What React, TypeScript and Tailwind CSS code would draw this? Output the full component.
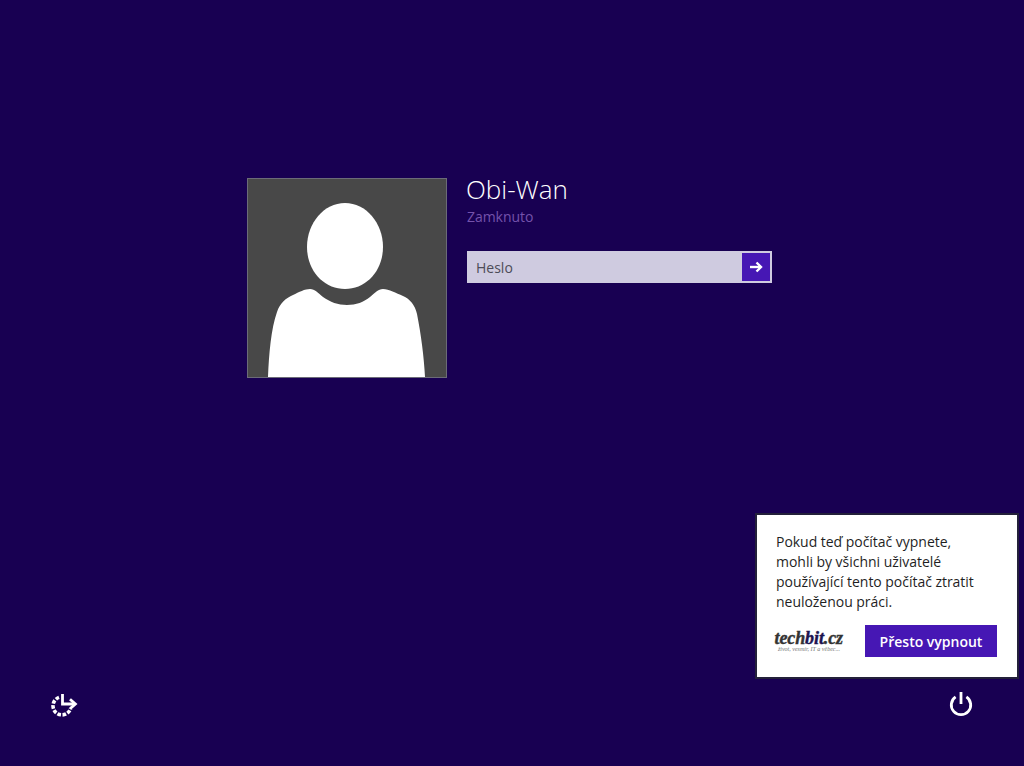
const Avatar = () => (
  <div className="w-[200px] h-[200px] bg-[#484848] border border-[#6b6b78] shrink-0 overflow-hidden">
    <svg viewBox="0 0 198 198" className="w-full h-full block">
      <path d="M59 68C59 44 76 24 97 24C118 24 135 44 135 68C135 92 118 110 97 110C76 110 59 92 59 68Z" fill="#fff" />
      <path d="M20 198C21 175 23 150 29 133C32 124 38 119 45 116C51 113 57 110 62 110C67 110 70 114 75 118C82 123 90 126 99 126C108 126 116 123 122 118C127 114 130 110 135 110C141 110 148 114 155 117C162 120 167 126 169 135C173 155 176 178 177 198Z" fill="#fff" />
    </svg>
  </div>
);

const EaseIcon = () => (
  <svg width="28" height="26" viewBox="0 0 28 26" fill="none" stroke="#fff">
    <path d="M9 6.4A9 9 0 1 0 20.6 17.5" strokeWidth="3.6" strokeDasharray="3.6 1.5" />
    <path d="M12.5 3V13H25" strokeWidth="2.8" />
    <path d="M20 8.2L25.4 13L20 17.8" strokeWidth="2.8" />
  </svg>
);

const PowerIcon = () => (
  <svg width="26" height="28" viewBox="0 0 26 28" fill="none" stroke="#fff" strokeWidth="2.8">
    <path d="M7.6 6.9A9.7 9.7 0 1 0 18.4 6.9" />
    <path d="M13 2V14" />
  </svg>
);

const App = () => {
  return (
    <div className="relative w-[1024px] h-[766px] overflow-hidden bg-[#180052] font-['Open_Sans','Noto_Sans',sans-serif] flex flex-col">
      <div className="flex pl-[247px] pt-[178px] gap-5">
        <Avatar />
        <div className="w-[305px]">
          <h1 className="text-[26px] leading-[23px] font-light text-white -ml-px">Obi-Wan</h1>
          <p className="text-[14px] leading-[20px] tracking-[-0.05px] text-[#7452ab] mt-[6px]">Zamknuto</p>
          <div className="mt-[24px] h-8 bg-[#cfcbe0] flex items-center justify-between pl-[9px] pr-0.5">
            <span className="text-[14px] text-[#4d4b57]">Heslo</span>
            <div className="w-7 h-7 bg-[#4617b4] flex items-center justify-center">
              <svg width="14" height="12" viewBox="0 0 14 12" fill="none" stroke="#fff" strokeWidth="2.4">
                <path d="M1 6H12" />
                <path d="M7.5 1.5L12 6L7.5 10.5" />
              </svg>
            </div>
          </div>
        </div>
      </div>

      <div className="mt-auto flex justify-between items-center px-[50px] pb-[48px]">
        <EaseIcon />
        <PowerIcon />
      </div>

      <div className="absolute left-[755px] top-[513px] w-[264px] h-[166px] bg-white border-2 border-[#23203a] px-[19px] pt-[17px]">
        <p className="text-[14px] leading-[20px] tracking-[-0.03px] text-[#1f1f1f]">
          Pokud teď počítač vypnete,
          <br />
          mohli by všichni uživatelé
          <br />
          používající tento počítač ztratit
          <br />
          neuloženou práci.
        </p>
        <div className="flex items-center justify-between mt-[13px] mr-[1px]">
          <div className="flex flex-col items-end -ml-[3px] w-[70px]">
            <span className="font-['Liberation_Serif',serif] italic font-bold text-[18px] leading-[15px] tracking-[-0.1px] text-[#333333] [-webkit-text-stroke:0.4px]">
              tech<span className="text-[#1c1450]">bit</span>.cz
            </span>
            <span className="font-['Liberation_Serif',serif] italic text-[6px] leading-[6px] text-[#777777] whitespace-nowrap pr-[3px]">
              život, vesmír, IT a věbec...
            </span>
          </div>
          <div className="w-[132px] h-8 bg-[#4617b4] text-white font-semibold text-[14px] flex items-center justify-center">
            Přesto vypnout
          </div>
        </div>
      </div>
    </div>
  );
};

export default App;
